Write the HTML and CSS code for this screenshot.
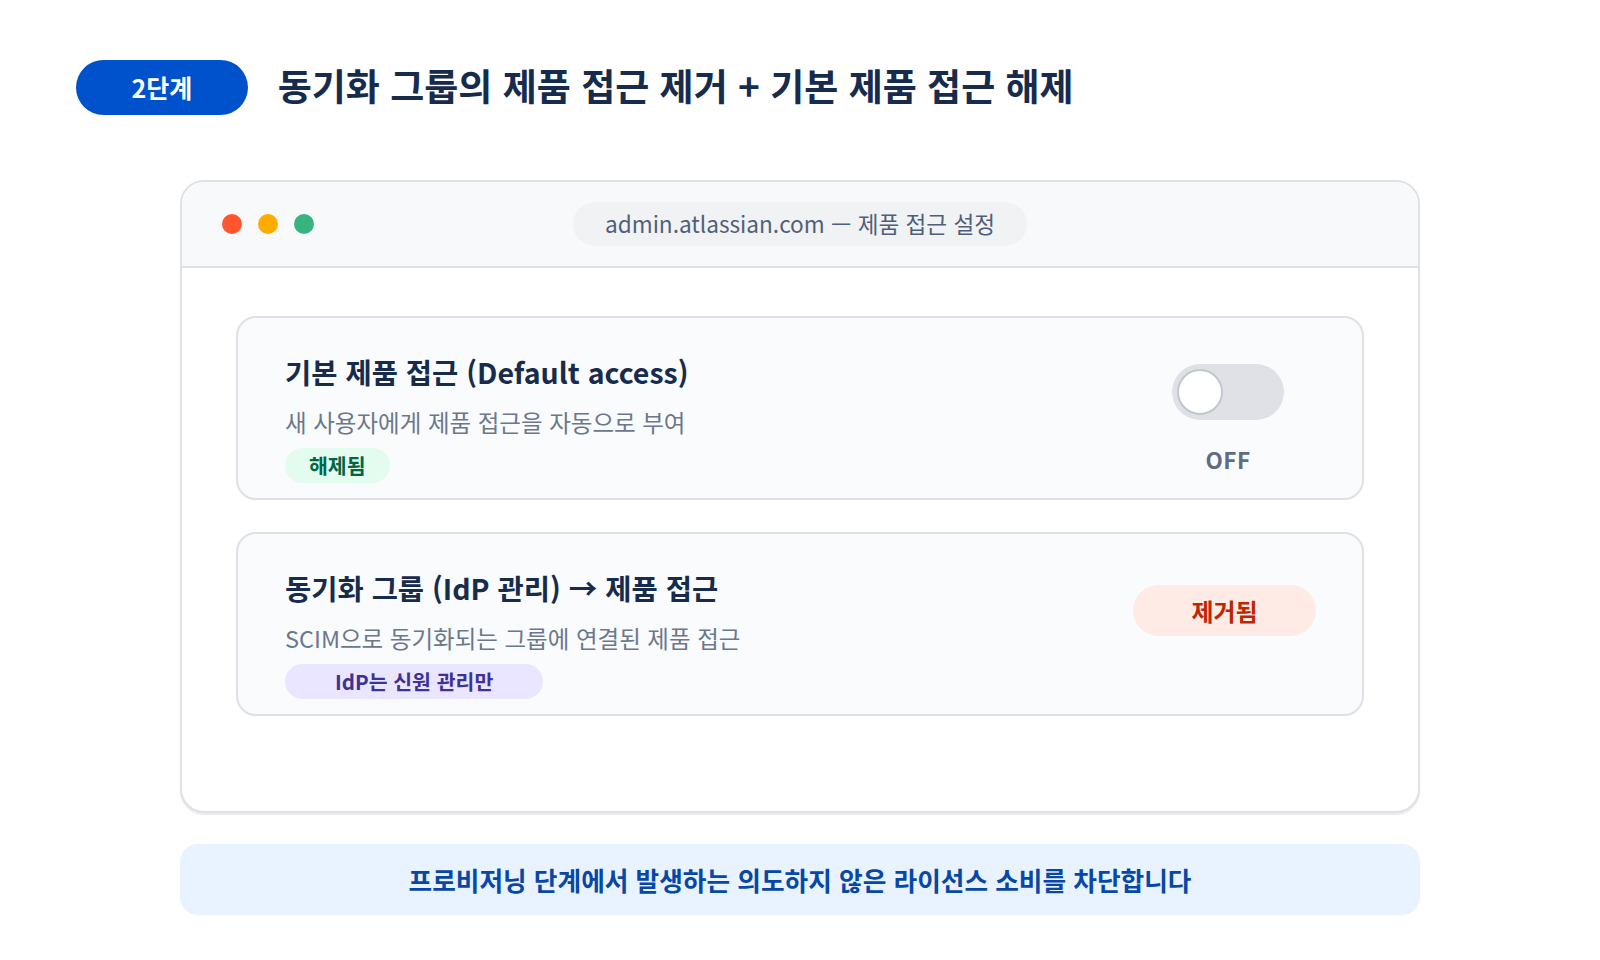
FILE: index.html
```html
<!DOCTYPE html>
<html lang="ko">
<head>
<meta charset="utf-8">
<title>2단계</title>
<link rel="stylesheet" href="styles.css">
</head>
<body>
<div class="page">
  <header class="head">
    <span class="step">2단계</span>
    <h1 class="head-title">동기화 그룹의 제품 접근 제거 + 기본 제품 접근 해제</h1>
  </header>

  <div class="window">
    <div class="titlebar">
      <div class="dots">
        <span class="dot dot-red"></span>
        <span class="dot dot-yellow"></span>
        <span class="dot dot-green"></span>
      </div>
      <div class="url">admin.atlassian.com — 제품 접근 설정</div>
      <div class="spacer"></div>
    </div>

    <div class="content">
      <div class="card">
        <div class="card-main">
          <div class="card-title">기본 제품 접근 (Default access)</div>
          <div class="card-desc">새 사용자에게 제품 접근을 자동으로 부여</div>
          <span class="tag tag-green">해제됨</span>
        </div>
        <div class="card-side side-toggle">
          <div class="toggle"><span class="knob"></span></div>
          <div class="off">OFF</div>
        </div>
      </div>

      <div class="card">
        <div class="card-main">
          <div class="card-title">동기화 그룹 (IdP 관리) → 제품 접근</div>
          <div class="card-desc">SCIM으로 동기화되는 그룹에 연결된 제품 접근</div>
          <span class="tag tag-purple">IdP는 신원 관리만</span>
        </div>
        <div class="card-side side-pill">
          <span class="removed">제거됨</span>
        </div>
      </div>
    </div>
  </div>

  <div class="banner">프로비저닝 단계에서 발생하는 의도하지 않은 라이선스 소비를 차단합니다</div>
</div>
</body>
</html>
```

FILE: styles.css
```css
* { box-sizing: border-box; }

html, body {
  margin: 0;
  padding: 0;
  background: #ffffff;
}

body {
  width: 1600px;
  height: 960px;
  overflow: hidden;
  font-family: "Noto Sans CJK KR", "Noto Sans", sans-serif;
  color: #172B4D;
}

.page {
  padding: 60px 0 0 0;
  display: flex;
  flex-direction: column;
}

.head {
  display: flex;
  align-items: center;
  gap: 30px;
  height: 55px;
  padding-left: 76px;
}

.step {
  display: inline-block;
  height: 55px;
  line-height: 55px;
  padding: 0 55.5px;
  border-radius: 28px;
  background: #0052CC;
  color: #ffffff;
  font-size: 25px;
  font-weight: 700;
}

.head-title {
  margin: 0 0 4px 0;
  font-size: 37px;
  font-weight: 700;
  color: #172B4D;
  line-height: 1.2;
}

.window {
  width: 1240px;
  height: 633px;
  margin: 65px auto 0;
  border: 2px solid #DFE1E6;
  border-radius: 24px;
  background: #ffffff;
  box-shadow: 0 2px 0 #EBECF0;
  overflow: hidden;
}

.titlebar {
  height: 86px;
  background: #F8F9FA;
  border-bottom: 2px solid #DFE1E6;
  display: grid;
  grid-template-columns: 1fr auto 1fr;
  align-items: center;
  padding: 0 40px;
}

.dots {
  display: flex;
  gap: 16px;
}

.dot {
  width: 20px;
  height: 20px;
  border-radius: 50%;
  display: block;
}
.dot-red { background: #FF5630; }
.dot-yellow { background: #FFAB00; }
.dot-green { background: #36B37E; }

.url {
  height: 44px;
  line-height: 44px;
  padding: 0 32px;
  border-radius: 22px;
  background: #F1F2F4;
  color: #505F79;
  font-size: 22.6px;
}

.content {
  padding: 48px 54px;
  display: flex;
  flex-direction: column;
  gap: 32px;
}

.card {
  height: 184px;
  border: 2px solid #DFE1E6;
  border-radius: 20px;
  background: #FAFBFC;
  display: flex;
  align-items: flex-start;
  justify-content: space-between;
  padding: 36px 46px 0 47px;
}

.card-main {
  display: flex;
  flex-direction: column;
  align-items: flex-start;
}

.card-title {
  font-size: 28.5px;
  font-weight: 700;
  line-height: 36px;
  color: #172B4D;
}

.card-desc {
  margin-top: 18px;
  font-size: 23.5px;
  line-height: 29px;
  color: #6B778C;
}

.tag {
  margin-top: 11px;
  height: 35px;
  line-height: 35px;
  border-radius: 18px;
  font-size: 20.5px;
  font-weight: 700;
}

.tag-green {
  padding: 0 24px;
  background: #E3FCEF;
  color: #006644;
}

.tag-purple {
  padding: 0 50px;
  background: #EAE6FF;
  color: #403294;
}

.card-side {
  display: flex;
  flex-direction: column;
  align-items: center;
}

.side-toggle {
  width: 176px;
  margin-top: 10px;
}

.toggle {
  width: 112px;
  height: 56px;
  border-radius: 28px;
  background: #DFE1E6;
  padding: 5px;
  display: flex;
}

.knob {
  width: 46px;
  height: 46px;
  border-radius: 50%;
  background: #ffffff;
  border: 2px solid #C1C7D0;
}

.off {
  margin-top: 25px;
  font-size: 22.5px;
  line-height: 28px;
  font-weight: 700;
  letter-spacing: 0.5px;
  color: #5E6C84;
}

.side-pill {
  margin-top: 15px;
}

.removed {
  display: block;
  width: 183px;
  height: 51px;
  line-height: 51px;
  text-align: center;
  border-radius: 26px;
  background: #FFEBE6;
  color: #BF2600;
  font-size: 24px;
  font-weight: 700;
}

.banner {
  width: 1240px;
  height: 71px;
  margin: 31px auto 0;
  border-radius: 18px;
  background: #E9F2FF;
  color: #0747A6;
  font-size: 25.7px;
  font-weight: 700;
  display: flex;
  align-items: center;
  justify-content: center;
}
```
